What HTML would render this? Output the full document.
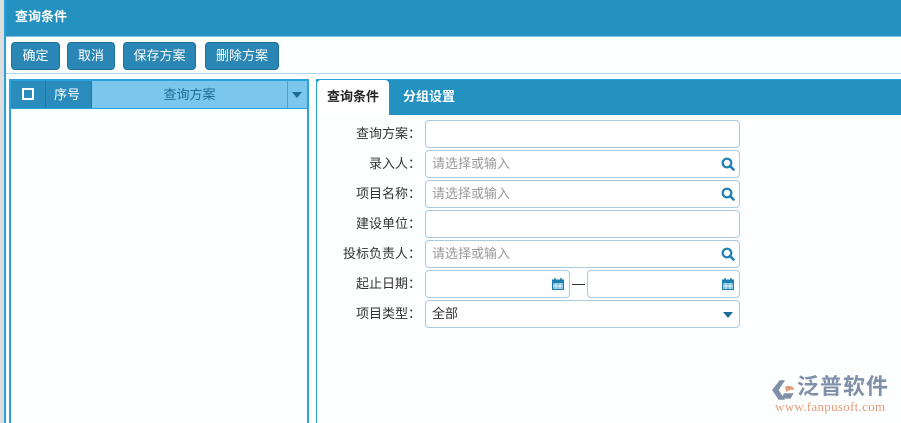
<!DOCTYPE html>
<html><head><meta charset="utf-8"><style>
*{box-sizing:border-box;margin:0;padding:0}
html,body{width:901px;height:423px;overflow:hidden}
body{position:relative;background:#fdfefe;font-family:"Liberation Sans","Noto Sans CJK SC",sans-serif;font-size:13px;color:#333}
.a{position:absolute}
.btn{position:absolute;top:42px;height:28px;background:#2a87b5;border:1px solid #1f6f98;border-radius:4px;color:#fff;font-size:13px;line-height:26px;text-align:center}
.lbl{position:absolute;right:480px;width:110px;text-align:right;height:27px;line-height:27px;font-size:13px;color:#333}
.inp{position:absolute;left:425px;width:315px;height:28px;border:1px solid #a9cbe2;border-radius:4px;background:#fff;font-size:13px;line-height:26px;padding-left:6px;color:#999}
.sr{position:absolute;right:4px;top:6px}
</style></head><body>
<div class="a" style="left:0;top:0;width:4px;height:423px;background:#ddd"></div>
<div class="a" style="left:4px;top:0;width:2px;height:423px;background:#2a9fd6"></div>
<div class="a" style="left:6px;top:0;width:895px;height:36px;background:#2492c0;color:#fff;font-weight:bold;font-size:13px;line-height:34px;padding-left:9px">查询条件</div>
<div class="a" style="left:6px;top:36px;width:895px;height:1px;background:#7ec3e3"></div>
<div class="btn" style="left:11px;width:49px">确定</div>
<div class="btn" style="left:67px;width:48px">取消</div>
<div class="btn" style="left:123px;width:73px">保存方案</div>
<div class="btn" style="left:205px;width:74px">删除方案</div>
<div class="a" style="left:6px;top:73px;width:895px;height:1px;background:#a9d3ea"></div>
<!-- left panel -->
<div class="a" style="left:9px;top:79px;width:300px;height:344px;border:2px solid #2aa3dc;border-bottom:none;background:#fdfefe"></div>
<div class="a" style="left:11px;top:81px;width:34px;height:27px;background:#2a8cbd"></div>
<div class="a" style="left:22px;top:88px;width:12px;height:12px;border:2px solid #fff"></div>
<div class="a" style="left:45px;top:81px;width:46px;height:27px;background:#2a8cbd;color:#fff;line-height:27px;padding-left:8px;border-left:1px solid #1f77a5">序号</div>
<div class="a" style="left:91px;top:81px;width:196px;height:27px;background:#7ac6ec;color:#1e6c96;line-height:27px;text-align:center;border-left:1px solid #1f77a5">查询方案</div>
<div class="a" style="left:287px;top:81px;width:20px;height:27px;background:#7ac6ec;border-left:1px solid #4a9fcb"></div>
<div class="a" style="left:292px;top:92px;border-left:5px solid transparent;border-right:5px solid transparent;border-top:6px solid #1f6d97"></div>
<div class="a" style="left:11px;top:108px;width:296px;height:1px;background:#2aa3dc"></div>
<!-- right panel -->
<div class="a" style="left:316px;top:79px;width:585px;height:344px;border:1px solid #2aa3dc;border-bottom:none;border-right:none;background:#fdfefe"></div>
<div class="a" style="left:317px;top:80px;width:584px;height:35px;background:#2492c0"></div>
<div class="a" style="left:317px;top:80px;width:72px;height:35px;background:#fff;border-radius:4px 4px 0 0;font-weight:bold;color:#222;line-height:34px;text-align:center">查询条件</div>
<div class="a" style="left:403px;top:80px;height:35px;line-height:34px;color:#fff;font-weight:bold">分组设置</div>

<div class="lbl" style="top:120px">查询方案：</div><div class="inp" style="top:120px"></div>
<div class="lbl" style="top:150px">录入人：</div><div class="inp" style="top:150px">请选择或输入<svg class="sr" width="14" height="14" viewBox="0 0 14 14"><circle cx="6" cy="6" r="4.3" fill="none" stroke="#1f7fb3" stroke-width="2.2"/><path d="M9 9l3.5 3.5" stroke="#1f7fb3" stroke-width="2.6" stroke-linecap="round"/></svg></div>
<div class="lbl" style="top:180px">项目名称：</div><div class="inp" style="top:180px">请选择或输入<svg class="sr" width="14" height="14" viewBox="0 0 14 14"><circle cx="6" cy="6" r="4.3" fill="none" stroke="#1f7fb3" stroke-width="2.2"/><path d="M9 9l3.5 3.5" stroke="#1f7fb3" stroke-width="2.6" stroke-linecap="round"/></svg></div>
<div class="lbl" style="top:210px">建设单位：</div><div class="inp" style="top:210px"></div>
<div class="lbl" style="top:240px">投标负责人：</div><div class="inp" style="top:240px">请选择或输入<svg class="sr" width="14" height="14" viewBox="0 0 14 14"><circle cx="6" cy="6" r="4.3" fill="none" stroke="#1f7fb3" stroke-width="2.2"/><path d="M9 9l3.5 3.5" stroke="#1f7fb3" stroke-width="2.6" stroke-linecap="round"/></svg></div>
<div class="lbl" style="top:270px">起止日期：</div>
<div class="inp" style="top:270px;width:145px"><svg class="a" style="right:5px;top:7px" width="12" height="12" viewBox="0 0 12 12"><rect x="0.5" y="2" width="11" height="9.5" fill="#7fbfe0" stroke="#1f7fb3"/><rect x="0.5" y="2" width="11" height="3" fill="#1f7fb3"/><path d="M3 0v3M9 0v3" stroke="#1f7fb3" stroke-width="1.5"/><path d="M4 5v6M8 5v6M1 8h10" stroke="#fff" stroke-width=".7"/></svg></div>
<div class="a" style="left:572px;top:284px;width:13px;height:1px;background:#333"></div>
<div class="inp" style="top:270px;left:587px;width:153px"><svg class="a" style="right:5px;top:7px" width="12" height="12" viewBox="0 0 12 12"><rect x="0.5" y="2" width="11" height="9.5" fill="#7fbfe0" stroke="#1f7fb3"/><rect x="0.5" y="2" width="11" height="3" fill="#1f7fb3"/><path d="M3 0v3M9 0v3" stroke="#1f7fb3" stroke-width="1.5"/><path d="M4 5v6M8 5v6M1 8h10" stroke="#fff" stroke-width=".7"/></svg></div>
<div class="lbl" style="top:300px">项目类型：</div><div class="inp" style="top:300px;color:#333">全部<div class="a" style="right:6px;top:11px;border-left:5px solid transparent;border-right:5px solid transparent;border-top:6px solid #1f6d97"></div></div>

<!-- logo -->
<svg class="a" style="left:771px;top:379px" width="26" height="22" viewBox="0 0 24 20"><path d="M8 1L1 10l6 9h6L7 10l6-9z" fill="#8090a8"/><path d="M13 7c4-2 8 0 9 3-3-1-6 0-8 2z" fill="#e39c7c"/><path d="M12 13h9l-3 5h-8z" fill="#8090a8"/></svg>
<div class="a" style="left:797px;top:374px;font-size:22px;font-weight:bold;color:#8090a8;letter-spacing:1px;line-height:26px">泛普软件</div>
<div class="a" style="left:775px;top:400px;font-family:'Liberation Serif',serif;font-size:13px;color:#e39c7c;line-height:14px;letter-spacing:0.3px">www.fanpusoft.com</div>
</body></html>
